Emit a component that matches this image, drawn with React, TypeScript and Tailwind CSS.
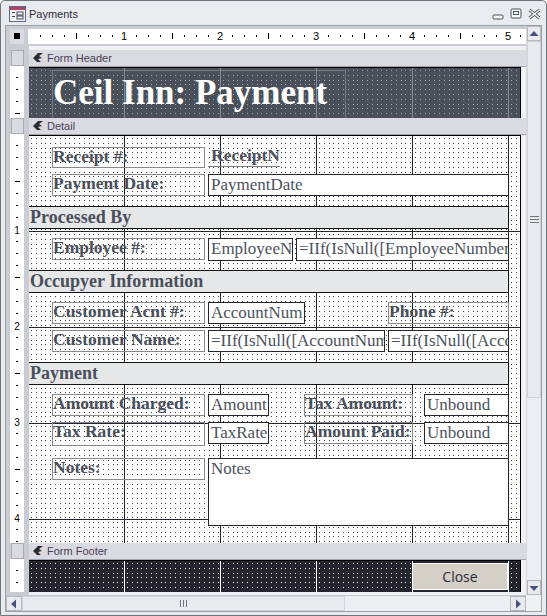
const serif = "font-['Liberation_Serif',serif]";
const dotsDetail =
  "bg-white bg-[linear-gradient(90deg,transparent_95px,#23262e_95px,#23262e_96px),linear-gradient(180deg,transparent_95px,#23262e_95px,#23262e_96px),linear-gradient(90deg,transparent_1px,#fff_1px,#fff_5px,transparent_5px,transparent_6px,#fff_6px,#fff_10px,transparent_10px,transparent_11px,#fff_11px,#fff_14px,transparent_14px,transparent_15px,#fff_15px,#fff_19px,transparent_19px,transparent_20px,#fff_20px),linear-gradient(180deg,transparent_1px,#fff_1px,#fff_5px,transparent_5px,transparent_6px,#fff_6px,#fff_10px,transparent_10px,transparent_11px,#fff_11px,#fff_14px,transparent_14px,transparent_15px,#fff_15px,#fff_19px,transparent_19px,transparent_20px,#fff_20px),linear-gradient(#3a3d46,#3a3d46)] bg-[length:96px_96px,96px_96px,24px_24px,24px_24px,100%_100%] bg-[position:0_0,0_0,2px_2px,2px_2px,0_0]";
const dotsHeader =
  "bg-[linear-gradient(90deg,transparent_95px,#8a8d93_95px,#8a8d93_96px),linear-gradient(90deg,transparent_1px,#4a505a_1px,#4a505a_5px,transparent_5px,transparent_6px,#4a505a_6px,#4a505a_10px,transparent_10px,transparent_11px,#4a505a_11px,#4a505a_14px,transparent_14px,transparent_15px,#4a505a_15px,#4a505a_19px,transparent_19px,transparent_20px,#4a505a_20px),linear-gradient(180deg,transparent_1px,#4a505a_1px,#4a505a_5px,transparent_5px,transparent_6px,#4a505a_6px,#4a505a_10px,transparent_10px,transparent_11px,#4a505a_11px,#4a505a_14px,transparent_14px,transparent_15px,#4a505a_15px,#4a505a_19px,transparent_19px,transparent_20px,#4a505a_20px),linear-gradient(#a4a8ae,#a4a8ae)] bg-[length:96px_96px,24px_24px,24px_24px,100%_100%] bg-[position:0_0,2px_2px,2px_2px,0_0]";
const dotsFooter =
  "bg-[linear-gradient(90deg,transparent_95px,#ffffff_95px,#ffffff_96px),linear-gradient(90deg,transparent_1px,#23262e_1px,#23262e_5px,transparent_5px,transparent_6px,#23262e_6px,#23262e_10px,transparent_10px,transparent_11px,#23262e_11px,#23262e_14px,transparent_14px,transparent_15px,#23262e_15px,#23262e_19px,transparent_19px,transparent_20px,#23262e_20px),linear-gradient(180deg,transparent_1px,#23262e_1px,#23262e_5px,transparent_5px,transparent_6px,#23262e_6px,#23262e_10px,transparent_10px,transparent_11px,#23262e_11px,#23262e_14px,transparent_14px,transparent_15px,#23262e_15px,#23262e_19px,transparent_19px,transparent_20px,#23262e_20px),linear-gradient(#ffffff,#ffffff)] bg-[length:96px_96px,24px_24px,24px_24px,100%_100%] bg-[position:0_0,2px_2px,2px_2px,0_0]";

function Label({ cls, t }: { cls: string; t: string }) {
  return (
    <div className={`shrink-0 border border-[#8a8a8a] text-[17.5px] leading-[17px] font-bold text-[#4a4f5a] whitespace-nowrap overflow-hidden ${serif} ${cls}`}>
      {t}
    </div>
  );
}
function Field({ cls, t }: { cls: string; t: string }) {
  return (
    <div className={`shrink-0 border border-[#23262e] bg-white pl-[2px] text-[17px] leading-[19px] text-[#4d525c] whitespace-nowrap overflow-hidden ${serif} ${cls}`}>
      {t}
    </div>
  );
}
function Band({ cls, t }: { cls: string; t: string }) {
  return (
    <div className={`w-[480px] h-[23px] border border-l-0 border-[#101218] bg-[#e6e7e9] text-[18px] leading-[20px] font-bold text-[#4a4f5a] pl-[1px] ${serif} ${cls}`}>
      {t}
    </div>
  );
}
function Row({ cls, children }: { cls: string; children: React.ReactNode }) {
  return <div className={`flex items-start pl-[23px] ${cls}`}>{children}</div>;
}
function Bar({ t }: { t: string }) {
  return (
    <div className="h-[17px] shrink-0 bg-[#d9dae2] border-b border-[#a0a3ab] flex items-center pl-[4px] gap-[3px] text-[11px] text-[#4a3f52] font-['Liberation_Sans',sans-serif]">
      <svg width="11" height="10" viewBox="0 0 11 10"><path d="M10 0 L5 0 L0 5 L4 9 L8 9 L5 6 L9 5 L6 3 Z" fill="#2b2b2f" /></svg>
      {t}
    </div>
  );
}
function Handle() {
  return <div className="h-[16px] w-[13px] ml-[1px] shrink-0 bg-[#d9dae2] border border-[#a8abb3]" />;
}
function Button({ d, cls }: { d: string; cls: string }) {
  return (
    <div className={`flex items-center justify-center bg-[#e8eaee] border border-[#b5b8c0] shrink-0 ${cls}`}>
      <svg width="10" height="10" viewBox="0 0 10 10"><path d={d} fill="#46527a" /></svg>
    </div>
  );
}

function Ruler() {
  const cells = [];
  for (let i = 1; i <= 41; i++) {
    const digit = i % 8 === 0;
    const mid = i % 4 === 0;
    cells.push(
      <div key={i} className="w-[12px] shrink-0 flex items-center justify-center">
        {digit ? (
          <span className="text-[11px] leading-[14px] text-black">{i / 8}</span>
        ) : mid ? (
          <span className="w-px h-[6px] bg-black" />
        ) : (
          <span className="w-px h-[2px] bg-black" />
        )}
      </div>
    );
  }
  return <div className="flex-1 h-[15px] bg-white overflow-hidden flex pl-[6px]">{cells}</div>;
}

function VTicks({ cls, count }: { cls: string; count: number }) {
  const cells = [];
  for (let i = 1; i <= count; i++) {
    const digit = i % 8 === 0;
    const mid = i % 4 === 0;
    cells.push(
      <div key={i} className="h-[12px] shrink-0 flex items-center justify-center">
        {digit ? (
          <span className="text-[10px] leading-[10px] text-black translate-y-[2px]">{i / 8}</span>
        ) : mid ? (
          <span className="h-px w-[5px] bg-black" />
        ) : (
          <span className="h-px w-[2px] bg-black" />
        )}
      </div>
    );
  }
  return <div className={`w-[14px] bg-white overflow-hidden shrink-0 flex flex-col pt-[5px] ${cls}`}>{cells}</div>;
}

export default function App() {
  return (
    <div className="w-[547px] h-[616px] bg-[#e9ebee] border border-[#6d747c] rounded-t-[5px] flex flex-col overflow-hidden font-['Liberation_Sans',sans-serif]">
      <div className="h-[24px] flex items-center pl-[8px] pt-[2px] shrink-0">
        <svg width="17" height="16" viewBox="0 0 17 16" className="mr-[3px]">
          <rect x="0.5" y="0.5" width="16" height="15" fill="#f4f6fb" stroke="#5a6a90" />
          <rect x="1" y="1" width="15" height="3" fill="#b5405f" />
          <rect x="3" y="6" width="3" height="1" fill="#445" /><rect x="8" y="6" width="6" height="3" fill="none" stroke="#445" />
          <rect x="3" y="10" width="3" height="1" fill="#445" /><rect x="8" y="10" width="6" height="3" fill="none" stroke="#445" />
        </svg>
        <span className="text-[11px] text-[#2d2d3a]">Payments</span>
        <div className="ml-auto flex items-center gap-[6px] pr-[5px]">
          <svg width="12" height="12" viewBox="0 0 12 12"><rect x="1" y="7" width="10" height="4" rx="1" fill="#f8f9fa" stroke="#4a5560" /></svg>
          <svg width="12" height="12" viewBox="0 0 12 12"><rect x="1" y="1" width="10" height="9" rx="1" fill="#f8f9fa" stroke="#4a5560" /><rect x="3.5" y="3.5" width="5" height="3" fill="none" stroke="#4a5560" /></svg>
          <svg width="13" height="12" viewBox="0 0 13 12"><path d="M1.5 2 L11.5 10 M11.5 2 L1.5 10" stroke="#4a5560" strokeWidth="3" /><path d="M1.5 2 L11.5 10 M11.5 2 L1.5 10" stroke="#f8f9fa" strokeWidth="1.4" /></svg>
        </div>
      </div>

      <div className="mx-[4px] flex-1 border border-[#9aa0a8] bg-[#f0f1f3] flex flex-col min-h-0 mb-[3px]">
        <div className="flex flex-1 min-h-0">
          <div className="w-[520px] flex flex-col">
            <div className="h-[20px] flex items-center shrink-0 bg-[#c9ccd3] pl-[4px]">
              <div className="w-[14px] h-[15px] mr-[4px] bg-[#d9dae2] flex items-center justify-center">
                <div className="w-[6px] h-[6px] bg-black" />
              </div>
              <Ruler />
            </div>
            <div className="flex flex-1 min-h-0">
              <div className="w-[23px] shrink-0 bg-[#c9ccd3] pl-[4px] flex flex-col">
                <div className="h-[4px] shrink-0" />
                <Handle />
                <VTicks cls="h-[52px]" count={4} />
                <Handle />
                <VTicks cls="h-[409px]" count={34} />
                <Handle />
                <VTicks cls="h-[33px]" count={2} />
              </div>
              <div className="w-[497px] flex flex-col">
                <div className="h-[4px] shrink-0" />
                <Bar t="Form Header" />
                <div className={`h-[51px] w-[492px] shrink-0 border-t border-black border-r border-r-black pl-[23px] pt-[2px] ${dotsHeader}`}>
                  <div className={`w-[294px] h-[48px] border border-[#7a7d84] border-b-0 text-[35px] leading-[44px] font-bold text-white whitespace-nowrap ${serif}`}>
                    Ceil Inn: Payment
                  </div>
                </div>
                <Bar t="Detail" />
                <div className={`h-[408px] w-[492px] shrink-0 border-t border-black border-r border-r-black pt-[11px] ${dotsDetail}`}>
                  <Row cls="">
                    <Label cls="w-[153px] h-[21px]" t="Receipt #:" />
                    <div className={`w-[72px] h-[20px] ml-[3px] border-b border-[#808080] text-[17.5px] leading-[17px] font-bold text-[#4d525c] pl-[3px] overflow-hidden whitespace-nowrap ${serif}`}>ReceiptN</div>
                  </Row>
                  <Row cls="mt-[6px] gap-[3px]">
                    <Label cls="w-[153px] h-[22px]" t="Payment Date:" />
                    <Field cls="w-[301px] h-[22px]" t="PaymentDate" />
                  </Row>
                  <Band cls="mt-[10px]" t="Processed By" />
                  <Row cls="mt-[9px] gap-[3px]">
                    <Label cls="w-[153px] h-[22px]" t="Employee #:" />
                    <Field cls="w-[85px] h-[23px]" t="EmployeeN" />
                    <Field cls="w-[213px] h-[23px]" t="=IIf(IsNull([EmployeeNumber" />
                  </Row>
                  <Band cls="mt-[9px]" t="Occupyer Information" />
                  <Row cls="mt-[9px]">
                    <Label cls="w-[153px] h-[22px]" t="Customer Acnt #:" />
                    <Field cls="w-[97px] h-[22px] ml-[3px]" t="AccountNum" />
                    <Label cls="w-[121px] h-[22px] ml-[83px]" t="Phone #:" />
                  </Row>
                  <Row cls="mt-[6px] gap-[3px]">
                    <Label cls="w-[153px] h-[22px]" t="Customer Name:" />
                    <Field cls="w-[177px] h-[22px]" t="=IIf(IsNull([AccountNum" />
                    <Field cls="w-[121px] h-[22px]" t="=IIf(IsNull([Acco" />
                  </Row>
                  <Band cls="mt-[10px]" t="Payment" />
                  <Row cls="mt-[9px]">
                    <Label cls="w-[153px] h-[22px]" t="Amount Charged:" />
                    <Field cls="w-[61px] h-[22px] ml-[3px]" t="Amount" />
                    <Label cls="w-[109px] h-[22px] ml-[35px]" t="Tax Amount:" />
                    <Field cls="w-[85px] h-[22px] ml-[11px]" t="Unbound" />
                  </Row>
                  <Row cls="mt-[6px]">
                    <Label cls="w-[153px] h-[24px]" t="Tax Rate:" />
                    <Field cls="w-[61px] h-[22px] ml-[3px]" t="TaxRate" />
                    <Label cls="w-[109px] h-[22px] ml-[35px]" t="Amount Paid:" />
                    <Field cls="w-[85px] h-[22px] ml-[11px]" t="Unbound" />
                  </Row>
                  <Row cls="mt-[12px] gap-[3px]">
                    <Label cls="w-[153px] h-[22px]" t="Notes:" />
                    <Field cls="w-[301px] h-[68px]" t="Notes" />
                  </Row>
                </div>
                <Bar t="Form Footer" />
                <div className={`h-[32px] w-[492px] shrink-0 border-t border-black border-r border-r-black pl-[383px] pt-[2px] ${dotsFooter}`}>
                  <div className="w-[96px] h-[27px] bg-[#d4d0c8] border border-white flex items-center justify-center text-[14px] text-[#2a2a33] font-['Open_Sans',sans-serif]">Close</div>
                </div>
              </div>
            </div>
          </div>
          <div className="w-[15px] flex flex-col shrink-0 bg-[#eceef1] border-l border-[#d5d7dc]">
            <Button d="M5 2 L9.5 7 L0.5 7 Z" cls="h-[15px]" />
            <div className="h-[357px] shrink-0 bg-[#e8eaee] border border-[#d0d3d9] flex items-center justify-center">
              <div className="w-[9px] h-[7px] border-y border-[#6f7680] flex items-center"><div className="w-full h-px bg-[#6f7680]" /></div>
            </div>
            <div className="flex-1" />
            <Button d="M5 8 L9.5 3 L0.5 3 Z" cls="h-[15px]" />
          </div>
        </div>
        <div className="h-[16px] flex shrink-0 bg-[#eceef1] border-t border-[#c5c8ce] mr-[15px]">
          <Button d="M2 5 L7 0.5 L7 9.5 Z" cls="w-[16px]" />
          <div className="w-[323px] shrink-0 bg-[#e8eaee] border border-[#d0d3d9] flex items-center justify-center">
            <div className="w-[7px] h-[7px] border-x border-[#6f7680] flex justify-center"><div className="w-px h-full bg-[#6f7680]" /></div>
          </div>
          <div className="flex-1" />
          <Button d="M8 5 L3 0.5 L3 9.5 Z" cls="w-[16px]" />
        </div>
      </div>
    </div>
  );
}
